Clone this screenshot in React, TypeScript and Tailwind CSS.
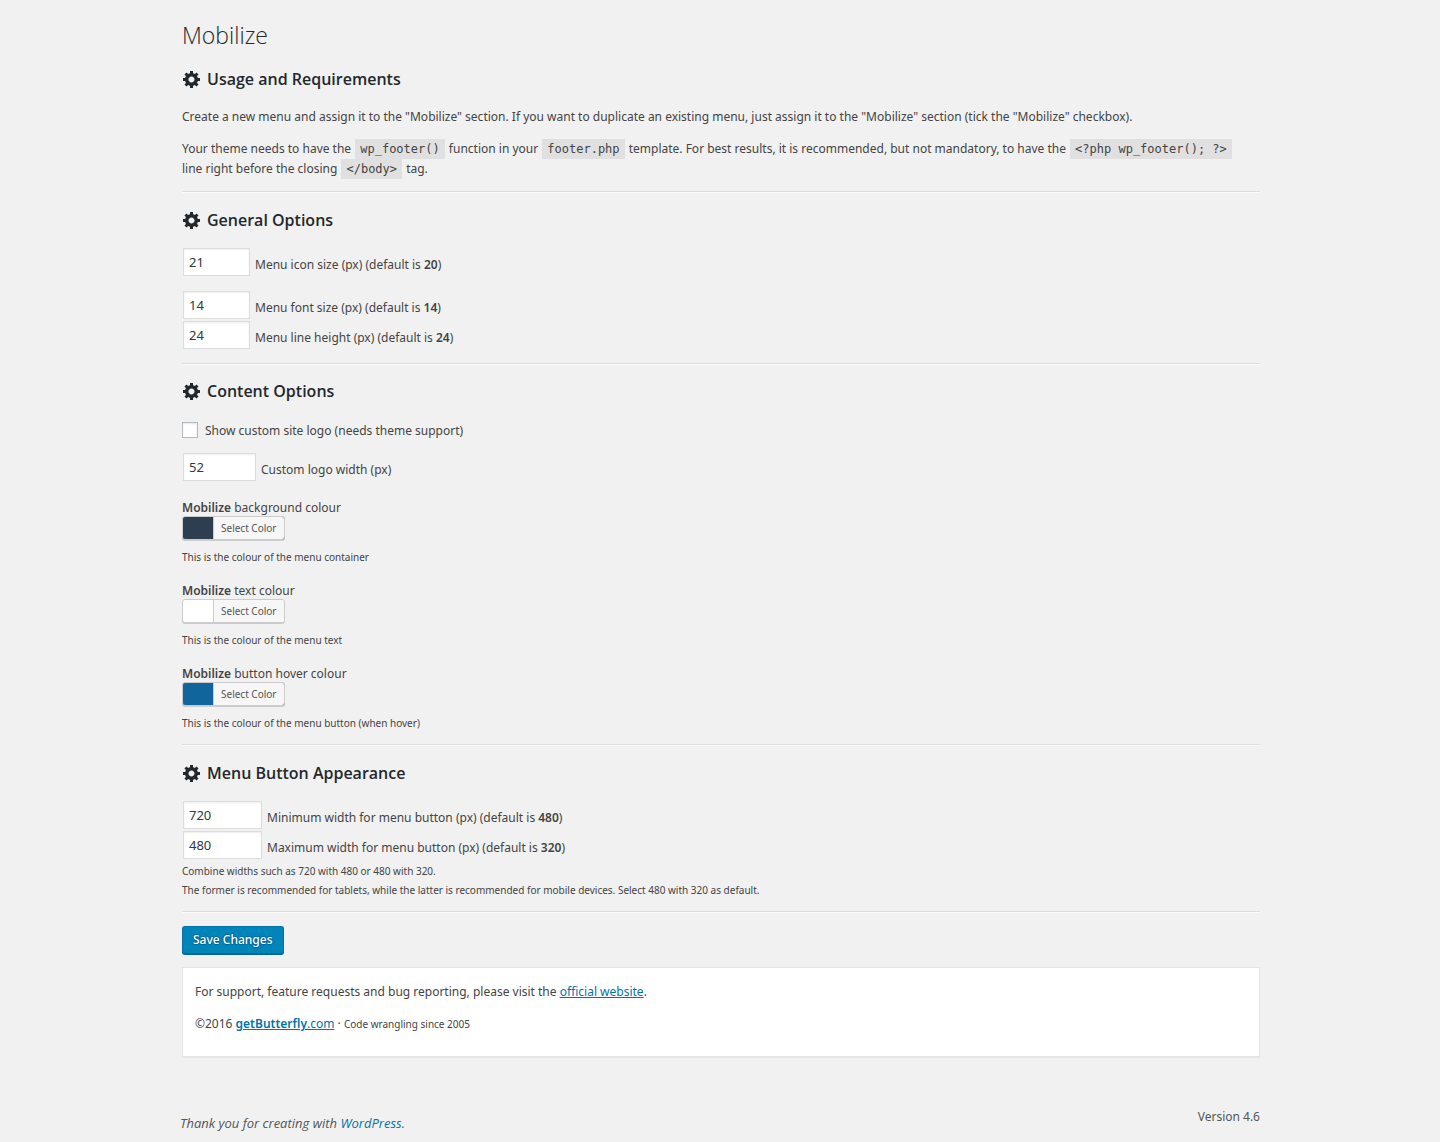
import { useId, useState, type ReactNode } from 'react';

function Gear() {
  return (
    <svg viewBox="0 0 20 20" className="size-5 shrink-0 fill-current" aria-hidden="true">
      <path d="M18 12h-2.18c-.17.7-.44 1.35-.81 1.93l1.54 1.54-2.1 2.1-1.54-1.54c-.58.36-1.23.63-1.91.79V19H8v-2.18c-.68-.16-1.33-.43-1.91-.79l-1.54 1.54-2.12-2.12 1.54-1.54c-.36-.58-.63-1.23-.79-1.91H1V9.03h2.17c.16-.7.44-1.35.8-1.94L2.43 5.55l2.1-2.1 1.54 1.54c.58-.37 1.24-.64 1.93-.81V2h3v2.18c.68.16 1.33.43 1.91.79l1.54-1.54 2.12 2.12-1.54 1.54c.36.59.64 1.24.8 1.94H18V12zm-8.5 1.5c1.66 0 3-1.34 3-3s-1.34-3-3-3-3 1.34-3 3 1.34 3 3 3z" />
    </svg>
  );
}

function Heading({ children }: { children: ReactNode }) {
  return (
    <h2 className="mb-[15px] flex items-center gap-[5px] font-['Open_Sans','Noto_Sans',sans-serif] text-base leading-6 font-semibold text-[#23282d]">
      <Gear />
      {children}
    </h2>
  );
}

function Rule() {
  return <hr className="h-0.5 border-t border-b border-t-[#dddddd] border-b-[#fafafa]" />;
}

function Code({ children }: { children: ReactNode }) {
  return (
    <code className="mx-px inline-block bg-[#e0e0e0] px-[5px] align-top font-['DejaVu_Sans_Mono','Liberation_Mono',monospace] text-xs leading-5">
      {children}
    </code>
  );
}

function NumberField({ value, width, children }: { value: string; width: string; children: ReactNode }) {
  const id = useId();
  return (
    <div className="flex h-[30px] items-center gap-[5px] pl-px">
      <input
        id={id}
        type="text"
        inputMode="numeric"
        defaultValue={value}
        className={`h-7 border border-[#dddddd] bg-white px-[5px] text-[13px] text-[#32373c] shadow-[inset_0_1px_2px_rgba(0,0,0,0.07)] outline-none focus:border-[#5b9dd9] ${width}`}
      />
      <label htmlFor={id} className="pt-1.5">
        {children}
      </label>
    </div>
  );
}

function ColourField({ swatch, name, note }: { swatch: string; name: string; note: string }) {
  return (
    <div>
      <p className="pt-px">
        <strong className="font-semibold">Mobilize</strong> {name}
      </p>
      <button
        type="button"
        aria-label={`Select Color: ${name}`}
        className={`-mt-0.5 flex h-6 cursor-pointer rounded-[3px] border border-[#cccccc] pl-[30px] shadow-[0_1px_0_#cccccc] ${swatch}`}
      >
        <span className="rounded-r-[2px] border-l border-[#cccccc] bg-[#f7f7f7] px-[7px] text-[10px] leading-[22px] text-[#555555]">
          Select Color
        </span>
      </button>
      <p className="mt-[7px] text-[10px] leading-5">{note}</p>
    </div>
  );
}

export default function App() {
  const [logo, setLogo] = useState(false);
  return (
    <div className="min-h-screen bg-[#f1f1f1] font-['Noto_Sans','Open_Sans',sans-serif] text-xs leading-5 text-[#444444]">
      <main className="mr-[180px] ml-[182px] pt-5">
        <h1 className="mb-[17px] font-['Open_Sans','Noto_Sans',sans-serif] text-[23px] leading-[30px] font-light text-[#23282d]">
          Mobilize
        </h1>

        <section>
          <Heading>Usage and Requirements</Heading>
          <p className="mb-3 pt-px">
            Create a new menu and assign it to the "Mobilize" section. If you want to duplicate an existing menu, just
            assign it to the "Mobilize" section (tick the "Mobilize" checkbox).
          </p>
          <p className="mb-3">
            Your theme needs to have the <Code>wp_footer()</Code> function in your <Code>footer.php</Code> template. For
            best results, it is recommended, but not mandatory, to have the <Code>{'<?php wp_footer(); ?>'}</Code>
            <br />
            line right before the closing <Code>{'</body>'}</Code> tag.
          </p>
        </section>

        <form onSubmit={(e) => e.preventDefault()}>
          <Rule />
          <section className="pt-[15px] pb-[13px]">
            <Heading>General Options</Heading>
            <div className="mb-[13px]">
              <NumberField value="21" width="w-[67px]">
                Menu icon size (px) (default is <strong className="font-semibold">20</strong>)
              </NumberField>
            </div>
            <NumberField value="14" width="w-[67px]">
              Menu font size (px) (default is <strong className="font-semibold">14</strong>)
            </NumberField>
            <NumberField value="24" width="w-[67px]">
              Menu line height (px) (default is <strong className="font-semibold">24</strong>)
            </NumberField>
          </section>

          <Rule />
          <section className="pt-[14px] pb-[11px]">
            <Heading>Content Options</Heading>
            <label className="mb-3 flex h-[22px] items-center gap-[7px] pt-0.5">
              <input
                type="checkbox"
                checked={logo}
                onChange={(e) => setLogo(e.target.checked)}
                className="size-4 appearance-none border border-[#b4b9be] bg-white shadow-[inset_0_1px_2px_rgba(0,0,0,0.1)] checked:bg-[#1e8cbe]"
              />
              <span className="pt-0.5">Show custom site logo (needs theme support)</span>
            </label>
            <div className="mb-[15px]">
              <NumberField value="52" width="w-[73px]">
                Custom logo width (px)
              </NumberField>
            </div>
            <div className="flex flex-col gap-[13px]">
              <ColourField
                swatch="bg-[#2c3e50]"
                name="background colour"
                note="This is the colour of the menu container"
              />
              <ColourField swatch="bg-white" name="text colour" note="This is the colour of the menu text" />
              <ColourField
                swatch="bg-[#10669c]"
                name="button hover colour"
                note="This is the colour of the menu button (when hover)"
              />
            </div>
          </section>

          <Rule />
          <section className="pt-[15px] pb-[11px]">
            <Heading>Menu Button Appearance</Heading>
            <NumberField value="720" width="w-[79px]">
              Minimum width for menu button (px) (default is <strong className="font-semibold">480</strong>)
            </NumberField>
            <NumberField value="480" width="w-[79px]">
              Maximum width for menu button (px) (default is <strong className="font-semibold">320</strong>)
            </NumberField>
            <p className="pt-0.5 text-[10px] leading-[19px]">
              Combine widths such as 720 with 480 or 480 with 320.
              <br />
              The former is recommended for tablets, while the latter is recommended for mobile devices. Select 480 with
              320 as default.
            </p>
          </section>

          <Rule />
          <button
            type="submit"
            className="mt-[13px] block h-7 cursor-pointer rounded-[3px] border border-[#0073aa] border-b-[#006799] bg-[#0085ba] px-2.5 text-xs leading-[26px] font-medium text-white shadow-[0_1px_0_#006799] [text-shadow:0_-1px_1px_#006799,1px_0_1px_#006799,0_1px_1px_#006799,-1px_0_1px_#006799]"
          >
            Save Changes
          </button>
        </form>

        <aside className="mt-[13px] border border-[#e5e5e5] bg-white px-3 pt-[14px] pb-[22px] shadow-[0_1px_1px_rgba(0,0,0,0.04)]">
          <p className="mb-3">
            For support, feature requests and bug reporting, please visit the{' '}
            <a href="#website" className="text-[#0073aa] underline">
              official website
            </a>
            .
          </p>
          <p>
            ©2016{' '}
            <a href="#getbutterfly" className="text-[#0073aa] underline">
              <strong className="font-semibold">getButterfly</strong>.com
            </a>{' '}
            · <small className="text-[10px]">Code wrangling since 2005</small>
          </p>
        </aside>
      </main>

      <footer className="mx-[180px] mt-[50px] flex items-start justify-between text-[#555555]">
        <p className="pt-1.5 font-['Open_Sans','Noto_Sans',sans-serif] text-[13px] italic">
          Thank you for creating with{' '}
          <a href="#wordpress" className="text-[#0073aa]">
            WordPress
          </a>
          .
        </p>
        <p>Version 4.6</p>
      </footer>
    </div>
  );
}
